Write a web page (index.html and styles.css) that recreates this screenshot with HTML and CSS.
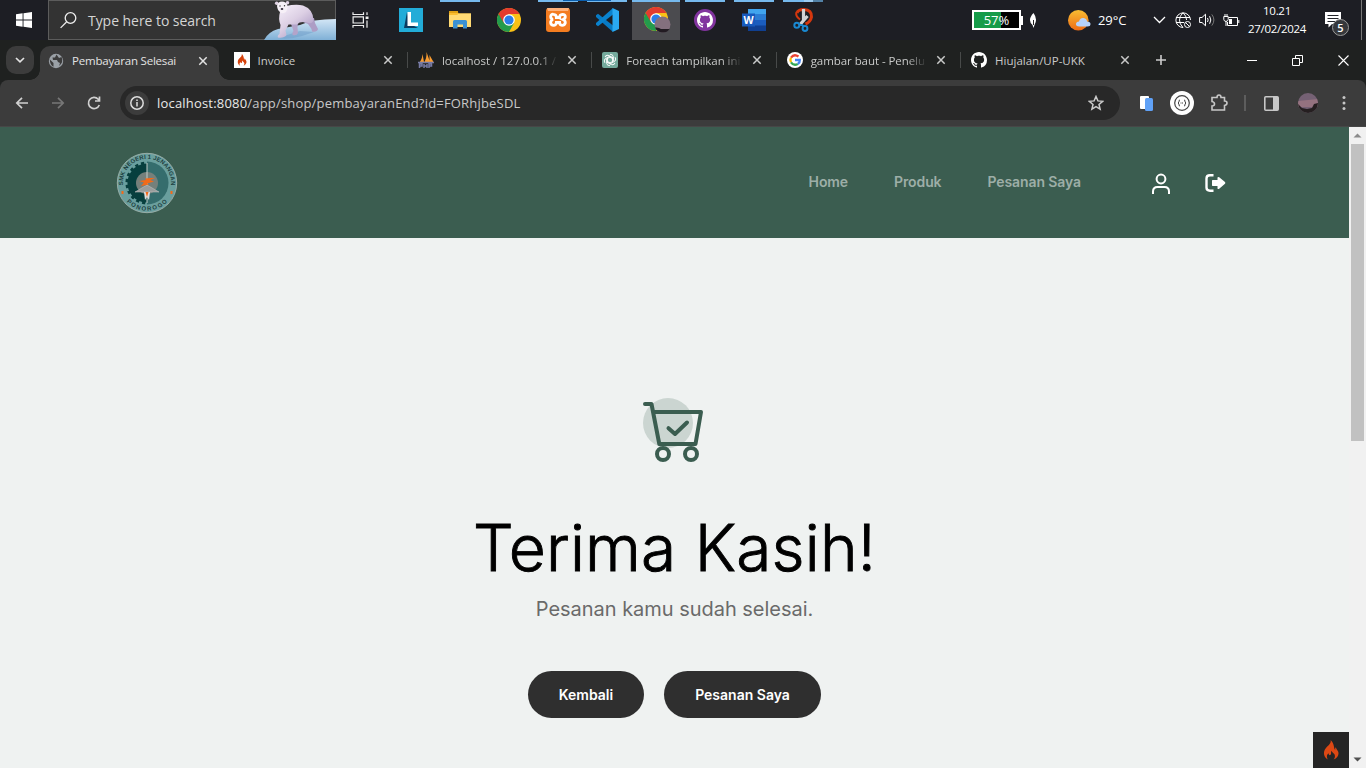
FILE: index.html
```html
<!DOCTYPE html>
<html lang="id">
<head>
<meta charset="utf-8">
<title>Pembayaran Selesai</title>
<link rel="stylesheet" href="styles.css">
</head>
<body>
<svg class="defs" width="0" height="0" aria-hidden="true">
  <symbol id="chrome" viewBox="0 0 24 24">
    <circle cx="12" cy="12" r="12" fill="#fbc116"/>
    <path d="M1.600 6A12 12 0 0 0 12 24L17 15 12 12Z" fill="#239b4c"/>
    <path d="M1.600 6A12 12 0 0 1 22.400 6H12L7 9.500 6.800 15Z" fill="#e33b2e"/>
    <circle cx="12" cy="12" r="5.800" fill="#fff"/><circle cx="12" cy="12" r="4.600" fill="#2a7de9"/>
  </symbol>
  <symbol id="flame" viewBox="0 0 16 20">
    <path d="M7.600 0C8.400 4 4.800 5.500 2.600 8.500 0 12 .3 16.500 4.800 19.500 3.400 17 3.600 15 5.600 13.300 5.600 15 6.600 15.700 7.600 14.700 8.600 13.500 7.700 12.300 8.300 10.800 9.300 13 11.800 13.300 11.900 16 12 17.500 11.500 18.700 10.600 19.600 14.800 17.900 16.400 14.300 15 11.200 14.200 9.500 13 8.800 12.900 7.200 12 8 12 9 12.300 9.900 10.500 9 11.800 3.500 7.600 0Z" fill="currentColor"/>
  </symbol>
  <symbol id="octocat" viewBox="0 0 16 16">
    <path d="M8 0C3.580 0 0 3.580 0 8c0 3.540 2.290 6.530 5.470 7.590.4.070.55-.17.55-.38 0-.19-.01-.82-.01-1.490-2.010.37-2.530-.49-2.690-.94-.09-.23-.48-.94-.82-1.130-.28-.15-.68-.52-.01-.53.63-.01 1.080.58 1.230.82.72 1.210 1.870.87 2.330.66.07-.52.28-.87.51-1.070-1.780-.2-3.640-.89-3.640-3.950 0-.87.31-1.590.82-2.150-.08-.2-.36-1.020.08-2.120 0 0 .67-.21 2.200.82.64-.18 1.320-.27 2-.27s1.360.09 2 .27c1.530-1.040 2.200-.82 2.200-.82.44 1.100.16 1.920.08 2.120.51.56.82 1.270.82 2.150 0 3.070-1.870 3.750-3.650 3.950.29.25.54.73.54 1.480 0 1.070-.01 1.930-.01 2.200 0 .21.15.46.55.38A8.010 8.010 0 0 0 16 8c0-4.420-3.580-8-8-8Z" fill="currentColor"/>
  </symbol>
  <symbol id="close" viewBox="0 0 10 10"><path d="M1.300 1.300 8.700 8.700M8.700 1.300 1.300 8.700" stroke="currentColor" stroke-width="1.500"/></symbol>
</svg>

<header class="taskbar">
  <div class="start"><svg width="16" height="16"><path d="M0 2.300 6.600 1.300V7.500H0ZM7.500 1.200 16 0V7.500H7.500ZM0 8.400H6.600V14.700L0 13.700ZM7.500 8.400H16V16L7.500 14.800Z" fill="#fff"/></svg></div>
  <div class="search">
    <svg class="lens" width="17" height="17" fill="none" stroke="#eee" stroke-width="1.300"><circle cx="10.500" cy="6" r="5.300"/><path d="M6.500 10 .6 15.900"/></svg>
    <span>Type here to search</span>
    <svg class="bear" width="72" height="39" viewBox="0 0 72 39">
      <defs><linearGradient id="ice" x1="0" y1="0" x2="0" y2="1"><stop stop-color="#d3e6f6"/><stop offset="1" stop-color="#7fb0d6"/></linearGradient>
      <linearGradient id="fur" x1="0" y1="0" x2=".8" y2="1"><stop stop-color="#f8f2fb"/><stop offset=".5" stop-color="#dccfe4"/><stop offset="1" stop-color="#a593bf"/></linearGradient></defs>
      <path d="M0 39Q4 31 14 28L36 24Q48 18 72 18V39Z" fill="url(#ice)"/>
      <path d="M14 37Q24 39 38 35L50 31 36 30Z" fill="#6d9cc8" opacity=".5"/>
      <path d="M26 20H34L33.500 27 34 32Q33 35 28.500 34L28.500 31.500 29.500 30Z" fill="#b3a4ca"/>
      <path d="M40 17H50L51 22 54 28Q53 31.500 48 30.500L47.500 28 44 23 39 21Z" fill="#ad9dc5"/>
      <path d="M22 5Q32 3 39 4.500 49 8 49.500 19 48 24 43 21.500 36 20 33 23.500L24.500 23.500 21.500 29.500 22.500 34Q20 37.500 14 36.500 13 34.500 15.500 33L16.500 24Q14 18 16 11Z" fill="url(#fur)"/>
      <circle cx="12.700" cy="2.300" r="1.800" fill="#dfd2e3"/><circle cx="23.500" cy="1.800" r="1.800" fill="#dfd2e3"/>
      <path d="M13 5Q13.500 .5 18 .5T23.500 5Q24 8.500 22 11 19.500 13 16.500 11.500 13.500 9.500 13 5Z" fill="#f6f0f7"/>
      <circle cx="16" cy="5" r=".7" fill="#333"/><circle cx="20.500" cy="4.800" r=".7" fill="#333"/><ellipse cx="18" cy="8" rx="1.300" ry=".9" fill="#3a3340"/>
    </svg>
  </div>
  <div class="taskview"><svg width="17" height="16" fill="none" stroke="#eee" stroke-width="1.200"><path d="M1 .3V2.500H11.500V.3M1 15.700V13.500H11.500V15.700M1.100 4.800H11.400V11H1.100ZM15 .3V3M15 8.500V15.700"/><path d="M13.600 4.500H16.500V7H13.600Z" fill="#eee" stroke="none"/></svg></div>
  <nav class="apps">
    <div class="app"><svg width="24" height="24"><path d="M0 0H24V24H0Z" fill="#22acd8"/><path d="M8 4 5 20H19L11 16Z" fill="#0b3b60"/><path d="M8.500 4H12V14.500H19V18H8.500Z" fill="#fff"/></svg></div>
    <div class="app open"><svg width="22" height="20"><path d="M0 1.500H8L10 3.500H22V17H0Z" fill="#f9bd31"/><path d="M0 5 8 5 10 3.500H22V17H0Z" fill="#ffda74"/><path d="M4 18V11.500Q4 10 5.500 10H16.500Q18 10 18 11.500V18.500H14V14.500H8.500V18.500H4Z" fill="#3a91d4"/><path d="M0 1H9V3H0Z" fill="#e0a115"/></svg></div>
    <div class="app"><svg width="24" height="24"><use href="#chrome"/></svg></div>
    <div class="app open loading"><svg width="24" height="24"><rect width="24" height="24" rx="3" fill="#f47c20"/><path d="M1 0H23L22 3H2Z" fill="#ffb27a"/><path d="M7.500 6.300Q4.700 6 4.700 8.600T7 11.500Q4.300 12.500 4.700 15T8 17.300Q10.300 17 10.400 14.500H13.600Q13.600 17.200 16 17.300T19.300 15Q19.500 12.600 17 11.500 19.400 10.700 19.300 8.500T16.500 6.300Q13.500 6.500 13.600 9.500H10.400Q10.500 6.500 7.500 6.300Z" fill="none" stroke="#fff" stroke-width="2.800"/></svg></div>
    <div class="app open"><svg width="24" height="24"><path d="M1 7.200 3 5.700 18 17.500V24L1 9Z" fill="#087ac4"/><path d="M1 16.800 3 18.300 18 6.500V0L1 15Z" fill="#0a82ce"/><path d="M17.500 0 24 3V21L17.500 24Z" fill="#2aa9f2"/></svg></div>
    <div class="app open active"><svg width="27" height="26"><svg width="24" height="24"><use href="#chrome"/></svg><circle cx="18.500" cy="17.500" r="8" fill="#84707e"/><path d="M11 20.500Q15 20 17 22L25.500 22Q23 26 18 25.500T11 20.500Z" fill="#221b22"/></svg></div>
    <div class="app open"><svg class="gh" width="22" height="22"><circle cx="11" cy="11" r="11" fill="#82349f"/><svg x="3" y="3" width="16" height="16" color="#fff"><use href="#octocat"/></svg></svg></div>
    <div class="app open"><svg width="24" height="22"><path d="M6 0H24V22H6Z" fill="#1b5dbe"/><path d="M6 0H24V5.500H6Z" fill="#41a5ee"/><path d="M6 5.500H24V11H6Z" fill="#2b7cd3"/><path d="M6 16.500H24V22H6Z" fill="#103f91"/><path d="M0 4.500H13V17.500H0Z" fill="#185abd"/><text x="1.500" y="14.700" font-family="Open Sans" font-weight="700" font-size="10.500" fill="#fff">W</text></svg></div>
    <div class="app open snip"><svg width="22" height="24" fill="none"><path d="M4 5Q5 1.500 11 1.500 19 2 18.500 9 17.500 14 12.500 16" stroke="#d4370e" stroke-width="3"/><path d="M3.500 4Q2 8 7 11.500" stroke="#d4370e" stroke-width="2"/><path d="M10.500 1V13M14.500 8 7.500 16" stroke="#d0d3d6" stroke-width="3.200"/><circle cx="3.800" cy="17.300" r="2.500" stroke="#1988d1" stroke-width="2"/><circle cx="12" cy="20.500" r="2.400" stroke="#1988d1" stroke-width="2"/><path d="M6 17H9L11 18.500" stroke="#1988d1" stroke-width="2"/></svg></div>
  </nav>
  <div class="tray">
    <div class="battery"><span>57%</span></div>
    <svg class="leaf" width="8" height="15"><path d="M4.500 0Q9 6 5.500 12L4.500 15 3.500 12Q-2 7 4.500 0Z" fill="#fff"/><path d="M4.500 7V12" stroke="#222"/></svg>
    <svg class="weather" width="23" height="21"><defs><linearGradient id="sun" x1="0" y1="0" x2="0" y2="1"><stop stop-color="#f8bd32"/><stop offset="1" stop-color="#ed6b15"/></linearGradient></defs><circle cx="10.300" cy="10.300" r="10.300" fill="url(#sun)"/><path d="M11.500 16.500Q7.500 16.500 8 13.500 8.500 11.500 11 11.500 12 7.500 15.500 8 19 8.500 19 11.500 22.500 11.500 22.500 14 22.500 16.500 19.500 16.500Z" fill="#b6d2fa"/></svg>
    <span class="temp">29°C</span>
    <svg class="chev" width="13" height="8"><path d="M1 1 6.500 6.500 12 1" fill="none" stroke="#fff" stroke-width="1.300"/></svg>
    <svg class="net" width="17" height="17" fill="none" stroke="#fff"><path d="M8 15.500A7.300 7.300 0 1 1 15.500 8M8 15.500Q4.500 12 4.500 8T8 .7M8 .7Q11.500 4 11.600 8M1 5.500H15M1 10.500H9"/><circle cx="12.500" cy="12.500" r="3"/><path d="M10.500 10.500 14.500 14.500"/></svg>
    <svg class="vol" width="17" height="14" fill="none" stroke="#fff"><path d="M.6 4.500H3L6.500 1.200V12.800L3 9.500H.6Z"/><path d="M8.500 5Q9.800 7 8.500 9M10.600 3.200Q13 7 10.600 10.800"/><path d="M12.800 1.400Q17 7 12.800 12.600" stroke="#777"/></svg>
    <svg class="plug" width="17" height="13" fill="none" stroke="#fff"><path d="M5.500 3.500H14.500V11.500H4.500V8M15.800 6V9M.8 2.500H5.200V5.500Q5 7 3 7.500.8 7 .8 5.500ZM2 0V2.500M4 0V2.500M3 7V12"/><path d="M6 5H9V10H6Z" fill="#fff" stroke="none"/></svg>
    <div class="clock"><span>10.21</span><span>27/02/2024</span></div>
    <div class="note"><svg width="16" height="16"><path d="M0 0H16V12H7L3.500 15.500V12H0Z" fill="#fff"/><path d="M2.500 3.500H13.500M2.500 6.500H13.500M2.500 9.500H10" stroke="#22242a"/></svg><span class="badge">5</span></div>
    <i class="peek"></i>
  </div>
</header>

<div class="tabs">
  <div class="tabsearch"><svg width="10" height="6"><path d="M1 1 5 4.800 9 1" fill="none" stroke="#e3e3e3" stroke-width="1.700"/></svg></div>
  <div class="strip">
    <div class="tab current">
      <svg width="16" height="16"><circle cx="8" cy="8" r="7.200" fill="#9aa0a6"/><path d="M1.800 6.500 5.500 10V13.800Q2 12 1.800 6.500ZM8.500 1.500 7 4.500H4.500L5 7H9L10 9 12 10 11 13Q16 9 13.500 4L11 5Z" fill="#3c3c3c"/></svg>
      <span class="w1">Pembayaran Selesai</span><svg class="x" width="10" height="10"><use href="#close"/></svg></div>
    <div class="tab nosep">
      <svg class="ci" width="16" height="16"><path d="M0 0H16V16H0Z" fill="#fff"/><svg x="3" y="2" width="10" height="12"><use href="#flame"/></svg></svg>
      <span>Invoice</span><svg class="x" width="10" height="10"><use href="#close"/></svg></div>
    <div class="tab">
      <svg width="16" height="16"><path d="M1 11Q4 8 4.500 2L6 10ZM5.500 11Q9 7 8.500 0L12 10ZM11.500 11 11.500 3 15.500 10Z" fill="#f89c31"/><path d="M0 10.500H16M1.500 16V12H4V14H2M6 16V12M6 14H9M9 12V16M11 16V12H13.500V14H11" fill="none" stroke="#777ba5" stroke-width="1.500"/></svg>
      <span class="fade">localhost / 127.0.0.1 /</span><svg class="x" width="10" height="10"><use href="#close"/></svg></div>
    <div class="tab">
      <svg width="16" height="16"><rect width="16" height="16" rx="2" fill="#74aa9c"/><g fill="none" stroke="#fff" stroke-width=".9"><path id="petal" d="M8 2.300Q11 2 11.400 5V9L8 11"/><use href="#petal" transform="rotate(60 8 8)"/><use href="#petal" transform="rotate(120 8 8)"/><use href="#petal" transform="rotate(180 8 8)"/><use href="#petal" transform="rotate(240 8 8)"/><use href="#petal" transform="rotate(300 8 8)"/></g></svg>
      <span class="fade tight">Foreach tampilkan ini</span><svg class="x" width="10" height="10"><use href="#close"/></svg></div>
    <div class="tab">
      <svg width="16" height="16" fill="none" stroke-width="2.300"><circle cx="8" cy="8" r="8" fill="#fff"/><path d="M4 5.700Q7 1.500 11.500 4.500" stroke="#ea4335"/><path d="M4 5.700Q2.800 8 4 10.300" stroke="#fbbc05"/><path d="M4 10.300Q6.500 14 10.800 12" stroke="#34a853"/><path d="M10.800 12Q13 10.500 12.800 8H8" stroke="#4285f4"/></svg>
      <span class="fade tight">gambar baut - Penelu</span><svg class="x" width="10" height="10"><use href="#close"/></svg></div>
    <div class="tab">
      <svg width="16" height="16" color="#fff"><use href="#octocat"/></svg>
      <span>Hiujalan/UP-UKK</span><svg class="x" width="10" height="10"><use href="#close"/></svg></div>
  </div>
  <div class="newtab"><svg width="12" height="12"><path d="M6 1V11M1 6H11" stroke="#ccc" stroke-width="1.600"/></svg></div>
  <div class="winctl">
    <svg width="10" height="11"><path d="M0 5.500H10" stroke="#fff"/></svg>
    <svg width="11" height="11" fill="none" stroke="#fff"><path d="M.5 3.500H7.500V10.500H.5ZM3.500 3.500V.5H10.500V7.500H7.500"/></svg>
    <svg width="11" height="11" stroke="#fff" stroke-width="1.100"><path d="M.5.5 10.500 10.500M10.500.5.5 10.500"/></svg>
  </div>
</div>

<div class="toolbar">
  <div class="navbtns">
    <svg width="16" height="16"><path d="M14 8H3M8 2.800 2.800 8 8 13.200" /></svg>
    <svg class="off" width="16" height="16"><path d="M2 8H13M8 2.800 13.200 8 8 13.200"/></svg>
    <svg width="16" height="16"><path d="M13.300 10A5.600 5.600 0 1 1 12.200 4.200L13.500 5.800M13.500 1.500V6H9"/></svg>
  </div>
  <div class="omnibox">
    <div class="info"><svg width="16" height="16"><circle cx="8" cy="8" r="6.200" fill="none" stroke="#ddd" stroke-width="1.500"/><path d="M8 7V11.500M8 4.500V6" stroke="#ddd" stroke-width="1.500"/></svg></div>
    <span class="url">localhost:8080<em>/app/shop/pembayaranEnd?id=FORhjbeSDL</em></span>
    <svg class="star" width="16" height="16"><path d="M8 1.500 9.900 5.900 14.700 6.300 11 9.500 12.100 14.200 8 11.700 3.900 14.200 5 9.500 1.300 6.300 6.100 5.900Z" fill="none" stroke="#ccc" stroke-width="1.500"/></svg>
  </div>
  <div class="ext">
    <svg width="14" height="15"><rect width="9" height="13" rx="1" fill="#fff"/><rect x="5" y="2" width="8" height="13" rx="1.500" fill="#60a1f6"/></svg>
    <svg width="24" height="24"><circle cx="12" cy="12" r="12" fill="#fff"/><circle cx="12" cy="12" r="7.300" fill="none" stroke="#444" stroke-width="1.200"/><path d="M10 9Q8.500 9 9 11L8 12 9 13Q8.500 15 10 15M14 9Q15.500 9 15 11L16 12 15 13Q15.500 15 14 15" fill="none" stroke="#444"/><path d="M10.500 12H13.500" stroke="#444" stroke-dasharray="1 .5"/></svg>
    <svg width="18" height="18"><path d="M2 3.500H7Q7 1 9 1T11 3.500H14.500V7Q17 7 17 9T14.500 11.500V16H2V12Q4.500 12 4.500 10T2 7.500Z" fill="none" stroke="#c7c7c7" stroke-width="1.600"/></svg>
    <i></i>
    <svg width="15" height="15"><rect x=".8" y=".8" width="13.400" height="13.400" rx="1" fill="none" stroke="#c7c7c7" stroke-width="1.600"/><path d="M9 1H14V14H9Z" fill="#c7c7c7"/></svg>
    <svg width="20" height="20"><defs><clipPath id="face"><circle cx="10" cy="10" r="10"/></clipPath></defs><g clip-path="url(#face)"><path d="M0 0H20V20H0Z" fill="#756174"/><path d="M0 8 20 6V14H0Z" fill="#94727f"/><path d="M0 11 4 15 9 16 14 15 16 11 20 10V20H0Z" fill="#251f20"/></g></svg>
    <svg width="4" height="16" fill="#c7c7c7"><circle cx="2" cy="2.500" r="1.500"/><circle cx="2" cy="8" r="1.500"/><circle cx="2" cy="13.500" r="1.500"/></svg>
  </div>
</div>

<div class="viewport">
  <main class="page">
    <div class="sitehead">
      <svg class="logo" width="62" height="62" viewBox="-31 -31 62 62">
        <defs><path id="arcTop" d="M-23.200 6A24 24 0 1 1 23.200 6"/><path id="arcLow" d="M-27.700 0A27.700 27.700 0 0 0 27.700 0"/></defs>
        <circle r="29.700" fill="#6a9f9e" stroke="#98aea8"/>
        <circle r="21.500" fill="#356d6d"/>
        <path d="M0-21.500A21.500 21.500 0 0 0 0 21.500Z" fill="#073f3e"/>
        <path d="M0-20.800A20.800 20.800 0 0 0 0 20.800" fill="none" stroke="#6a9f9e" stroke-width="2.600" stroke-dasharray="3 3.300"/>
        <circle r="11" fill="#75807b"/>
        <path d="M0-20V20" stroke="#c3ceca"/>
        <path d="M-12 9 0 2 12 9Z" fill="#9a9d9c" stroke="#c7c7c7" stroke-width=".5"/>
        <path d="M8-5 4-5-2-4.500-1-3-8-2-3-.5-6 3 2 1.500 0 .5 7-1.500 3-3Z" fill="#f36a18"/>
        <path d="M-3 9H3L2 17 0 14-2 17Z" fill="#ddd"/><path d="M-1.500 9H1.500L0 14Z" fill="#f36a18"/>
        <path d="M-25.500 8H-23.500V11H-25.500ZM23.500 8H25.500V11H23.500Z" fill="#f36a18"/>
        <text class="seal" font-size="6"><textPath href="#arcTop" startOffset="50%" text-anchor="middle" textLength="80">SMK NEGERI 1 JENANGAN</textPath></text>
        <text class="seal" font-size="6"><textPath href="#arcLow" startOffset="50%" text-anchor="middle" textLength="46">PONOROGO</textPath></text>
      </svg>
      <nav class="menu"><a>Home</a><a>Produk</a><a>Pesanan Saya</a></nav>
      <svg class="user" width="20" height="22" fill="none" stroke="#fff" stroke-width="2"><circle cx="10" cy="6" r="4.400"/><path d="M2 21V18.500Q2 14 6.500 14H13.500Q18 14 18 18.500V21"/></svg>
      <svg class="exit" width="21" height="18"><path d="M8.500 1.300H5Q1.500 1.300 1.500 4.500V13.500Q1.500 16.700 5 16.700H8.500" fill="none" stroke="#fff" stroke-width="2.400"/><path d="M7.500 6H12.500V3.500Q13 2.500 14.200 3.200L20 8Q20.700 9 20 9.800L14.200 14.800Q13 15.500 12.500 14.500V12H7.500Q7 12 7 11V7Q7 6 7.500 6Z" fill="#fff"/></svg>
    </div>
    <section class="thanks">
      <svg class="cart" width="62" height="66" viewBox="642 397 62 66" fill="none" stroke="#3b5d50" stroke-width="4" stroke-linecap="round" stroke-linejoin="round">
        <circle cx="668" cy="423" r="25" fill="#cbd5d1" stroke="none"/>
        <path d="M645 404H651.500L659.300 444H695.500L701 412H654M668.500 428.200 675 434 687 422.500"/>
        <circle cx="663" cy="454" r="6" fill="#eff2f1"/><circle cx="691" cy="454" r="6" fill="#eff2f1"/>
      </svg>
      <h1>Terima Kasih!</h1>
      <p>Pesanan kamu sudah selesai.</p>
      <div class="actions"><a class="b1">Kembali</a><a class="b2">Pesanan Saya</a></div>
    </section>
    <div class="debug"><svg width="16" height="20"><use href="#flame"/></svg></div>
  </main>
  <div class="scroll">
    <svg width="17" height="17"><path d="M4.500 10.500 8.500 6.500 12.500 10.500Z" fill="#8b8b8b"/></svg>
    <div class="thumb"></div>
    <svg class="down" width="17" height="17"><path d="M4.500 6.500 8.500 10.500 12.500 6.500Z" fill="#505050"/></svg>
  </div>
</div>
</body>
</html>
```
FILE: styles.css
```css
* { box-sizing: border-box; }
body { margin: 0; width: 1366px; height: 768px; overflow: hidden; font-family: "Open Sans", "Noto Sans", sans-serif; background: #1f2120; }
svg { display: block; flex: none; }
.defs { position: absolute; }

.taskbar { display: flex; height: 40px; background: #1d1e24; color: #fff; }
.start { width: 48px; display: grid; place-items: center; }
.search { width: 288px; display: flex; align-items: center; background: #333; border: 1px solid #5c5c5c; color: #d5d5d5; font-size: 14px; letter-spacing: -.05px; }
.lens { margin: 0 11px; }
.search span { white-space: nowrap; flex: 1; }
.bear { margin: 0 -1px -1px 0; }
.taskview { width: 51px; display: grid; place-items: center; padding-right: 3px; }
.apps { display: flex; gap: 1px; }
.app { position: relative; width: 48px; display: grid; place-items: center; }
.app.open::before { content: ""; position: absolute; top: 0; left: 4px; width: 40px; height: 2px; background: #76b9ed; }
.app.active { background: #4b4b4f; padding-left: 3px; }
.app.active::before { left: 0; width: 48px; }
.app.loading::after { content: ""; position: absolute; z-index: 1; top: 0; left: 29px; width: 48px; height: 1px; background: #0b5fae; }
.app.snip::before { background: linear-gradient(90deg, #76b9ed 0 21px, #9bcbf0 21px 30px, #5281a6 30px); }
.app.snip { padding-left: 2px; }
.tray { display: flex; align-items: center; margin-left: auto; padding-right: 4px; }
.battery { width: 49px; height: 20px; border: 2px solid #fff; background: linear-gradient(90deg, #169b49 0 27px, #000 27px); display: grid; place-items: center; font-size: 13px; line-height: 16px; position: relative; }
.battery::after { content: ""; position: absolute; right: -4px; top: 4px; width: 2px; height: 9px; background: #fff; }
.leaf { margin-left: 8px; }
.weather { margin-left: 31px; }
.temp { width: 30px; margin-left: 7px; font-size: 13px; letter-spacing: -.1px; }
.chev { margin-left: 25px; }
.net { margin-left: 9px; }
.vol { margin-left: 7px; }
.plug { margin-left: 7px; }
.clock { width: 70px; margin-left: 2px; display: grid; justify-items: center; font-size: 11.500px; line-height: 18px; letter-spacing: -.3px; }
.note { position: relative; width: 24px; height: 16px; margin-left: 13px; }
.badge { position: absolute; left: 7px; top: 7px; width: 17px; height: 17px; border: 1px solid #999; border-radius: 50%; background: #36383c; font-size: 11px; line-height: 15px; text-align: center; font-weight: 600; }
.peek { width: 1px; height: 40px; margin-left: 12px; background: #777; }

.tabs { display: flex; height: 40px; background: #1f2120; color: #c9cac9; }
.tabsearch { width: 28px; height: 28px; margin: 6px 4px 0 6px; border-radius: 10px; background: #3c3c3c; display: grid; place-items: center; }
.strip { display: flex; }
.tab { position: relative; width: 184.400px; display: flex; align-items: center; gap: 8px; padding: 0 14px 0 11px; font-size: 11.500px; }
.tab span { flex: 1; white-space: nowrap; }
.tab .fade { -webkit-mask-image: linear-gradient(90deg, #000 96px, transparent 116px); }
.tab .tight { letter-spacing: -.06px; }
.tab + .tab:not(.nosep)::before { content: ""; position: absolute; left: 0; top: 12px; width: 1px; height: 16px; background: #484a49; }
.tab.current { height: 34px; width: 179px; margin: 6px 3.500px 0 2px; padding: 0 11px 5px 8px; background: #3c3c3c; border-radius: 10px 10px 0 0; color: #e3e3e3; }
.tab.current::before, .tab.current::after { content: ""; position: absolute; bottom: 0; width: 10px; height: 10px; }
.tab.current::before { left: -10px; background: radial-gradient(circle at 0 0, transparent 9.500px, #3c3c3c 10px); }
.tab.current::after { right: -10px; background: radial-gradient(circle at 100% 0, transparent 9.500px, #3c3c3c 10px); }
.ci { color: #d6420c; }
.w1 { letter-spacing: -.2px; }
.newtab { width: 33px; display: grid; place-items: center; }
.winctl { display: flex; margin-left: auto; }
.winctl svg { margin: 15px 17.500px 0; }

.toolbar { display: flex; align-items: center; height: 47px; background: #3c3c3c; border-radius: 8px 8px 0 0; border-bottom: 1px solid #474747; }
.navbtns { display: flex; gap: 20px; margin-left: 14px; fill: none; stroke: #d0d0d0; stroke-width: 1.700px; }
.off { stroke: #777; }
.omnibox { width: 1000px; height: 34px; margin-left: 18px; border-radius: 17px; background: #282828; display: flex; align-items: center; padding: 0 16px 0 5px; }
.info { width: 24px; height: 24px; border-radius: 50%; background: #3c3c3c; display: grid; place-items: center; }
.url { flex: 1; margin-left: 8px; font-size: 13px; letter-spacing: .19px; color: #e8e8e8; }
.url em { font-style: normal; color: #c9c9c9; }
.ext { display: flex; align-items: center; margin-left: 20px; }
.ext svg:nth-of-type(2) { margin-left: 16px; }
.ext svg:nth-of-type(3) { margin-left: 16px; }
.ext i { width: 2px; height: 16px; background: #5d5d5d; margin: 0 0 0 16px; }
.ext svg:nth-of-type(4) { margin-left: 18px; }
.ext svg:nth-of-type(5) { margin: 0 24px 0 19px; }

.viewport { display: flex; height: 641px; }
.page { position: relative; width: 1349px; background: #eff2f1; font-family: Inter, sans-serif; }
.sitehead { display: flex; align-items: center; height: 111px; padding: 0 123px 0 116px; background: #3b5d50; }
.seal { font-family: "Liberation Sans", sans-serif; font-weight: 700; fill: #1d403f; }
.menu { display: flex; gap: 46px; margin: 0 0 1px auto; font-size: 14px; font-weight: 600; line-height: 20px; letter-spacing: -.1px; color: #9daea7; }
.user { margin: 3px 0 0 70px; }
.exit { margin: 1px 0 0 34px; }
.thanks { display: flex; flex-direction: column; align-items: center; padding-top: 159px; }
.cart { margin-right: 3px; }
h1 { margin: 46px 0 0; font-size: 64px; font-weight: 300; line-height: 77px; letter-spacing: .2px; color: #000; -webkit-text-stroke: .9px #000; }
p { margin: 8px 0 0; font-size: 20px; line-height: 30px; letter-spacing: -.03px; color: #6a6a6a; font-weight: 400; }
.actions { display: flex; gap: 20px; margin-top: 47px; }
.actions a { height: 47px; border-radius: 24px; background: #2f2f2f; color: #fff; font-size: 14px; font-weight: 600; line-height: 48px; text-align: center; }
.b1 { width: 116px; }
.b2 { width: 157px; }
.debug { position: absolute; right: 0; bottom: 0; width: 36px; height: 36px; background: #252525; color: #dd4814; display: grid; place-items: center; }
.scroll { width: 17px; background: #f1f1f1; display: flex; flex-direction: column; }
.thumb { height: 297px; margin: 0 2px; background: #c1c1c1; }
.down { margin-top: auto; }
```
